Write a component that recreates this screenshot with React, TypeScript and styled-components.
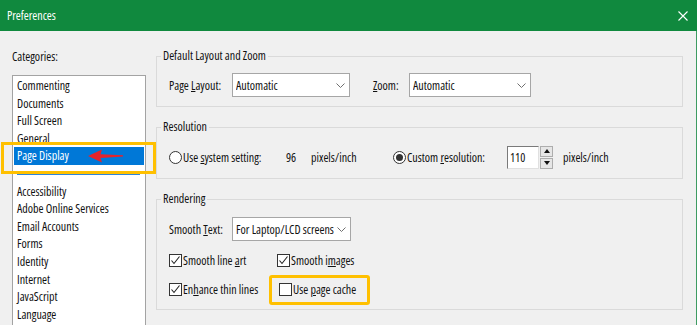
import styled, {createGlobalStyle} from 'styled-components';

const GlobalStyle = createGlobalStyle`
  html, body {
    margin: 0;
    padding: 0;
    background: #ffffff;
  }
  body {
    font-family: "Open Sans", "Liberation Sans", sans-serif;
    font-stretch: 75%;
    font-size: 12px;
    color: #111111;
  }
`;

const categoriesTop = ['Commenting', 'Documents', 'Full Screen', 'General'];
const categoriesBottom = [
  'Accessibility', 'Adobe Online Services', 'Email Accounts', 'Forms',
  'Identity', 'Internet', 'JavaScript', 'Language',
];

const Chevron = () => (
  <ChevronIcon width="9" height="5" viewBox="0 0 9 5">
    <polyline points="0.5,0.5 4.5,4.5 8.5,0.5" fill="none" stroke="#6f6f6f" strokeWidth="1" />
  </ChevronIcon>
);

const Dropdown = ({width, value}: {width: number; value: string}) => (
  <SelectBox $w={width}>
    <SelectValue>{value}</SelectValue>
    <Chevron />
  </SelectBox>
);

const Check = ({checked, children}: {checked?: boolean; children: React.ReactNode}) => (
  <CheckLabel>
    <CheckBox>
      {checked && (
        <svg width="11" height="11" viewBox="0 0 11 11">
          <polyline points="1.5,5.5 4,8.5 9.5,1.5" fill="none" stroke="#222" strokeWidth="1.1" />
        </svg>
      )}
    </CheckBox>
    <span>{children}</span>
  </CheckLabel>
);

export default function App() {
  return (
    <>
      <GlobalStyle />
      <Window>
        <TitleBar>
          <span>Preferences</span>
          <svg width="10" height="10" viewBox="0 0 10 10">
            <path d="M0.5 0.5 L9.5 9.5 M9.5 0.5 L0.5 9.5" stroke="#ffffff" strokeWidth="1.1" />
          </svg>
        </TitleBar>
        <Body>
          <Sidebar>
            <SidebarLabel>Categories:</SidebarLabel>
            <CategoryList>
              {categoriesTop.map(c => <CategoryItem key={c}>{c}</CategoryItem>)}
              <SelectedItem>
                Page Display
                <Arrow width="36" height="14" viewBox="0 0 36 14">
                  <polygon points="0,7 14,0.5 12.5,5.2 35,6.2 35,7.6 12.5,9 14,13.5" fill="#e5232b" />
                </Arrow>
              </SelectedItem>
              <SeparatorItem />
              {categoriesBottom.map(c => <CategoryItem key={c}>{c}</CategoryItem>)}
            </CategoryList>
          </Sidebar>

          <Main>
            <Group $top={9}>
              <Legend>Default Layout and Zoom</Legend>
              <GroupContent>
                <Row>
                  <FieldLabel $w={63}>Page <Key>L</Key>ayout:</FieldLabel>
                  <Dropdown width={118} value="Automatic" />
                  <FieldLabel $w={36} $ml={23}><Key>Z</Key>oom:</FieldLabel>
                  <Dropdown width={122} value="Automatic" />
                </Row>
              </GroupContent>
            </Group>

            <Group $top={10}>
              <Legend>Resolution</Legend>
              <GroupContent>
                <Row>
                  <RadioLabel $w={117}>
                    <Radio />
                    <span>Use <Key>s</Key>ystem setting:</span>
                  </RadioLabel>
                  <FieldLabel $w={25}>96</FieldLabel>
                  <FieldLabel $w={82}>pixels/inch</FieldLabel>
                  <RadioLabel $w={114}>
                    <Radio $checked />
                    <span>Custom <Key>r</Key>esolution:</span>
                  </RadioLabel>
                  <NumberInput>110</NumberInput>
                  <Spinner>
                    <SpinButton><Triangle $up /></SpinButton>
                    <SpinButton><Triangle /></SpinButton>
                  </Spinner>
                  <FieldLabel $w={60} $ml={10}>pixels/inch</FieldLabel>
                </Row>
              </GroupContent>
            </Group>

            <Group $top={10}>
              <Legend>Rendering</Legend>
              <GroupContent>
                <Row>
                  <FieldLabel $w={63}>Smooth <Key>T</Key>ext:</FieldLabel>
                  <Dropdown width={119} value="For Laptop/LCD screens" />
                </Row>
                <CheckGrid>
                  <Check checked>Smooth line <Key>a</Key>rt</Check>
                  <Check checked>Smooth i<Key>m</Key>ages</Check>
                  <Check checked>En<Key>h</Key>ance thin lines</Check>
                  <HighlightCell>
                    <Check>Use <Key>p</Key>age cache</Check>
                  </HighlightCell>
                </CheckGrid>
              </GroupContent>
            </Group>
          </Main>
        </Body>
      </Window>
    </>
  );
}

const Window = styled.div`
  width: 697px;
  height: 325px;
  display: flex;
  flex-direction: column;
  overflow: hidden;
`;

const TitleBar = styled.div`
  flex: none;
  height: 31px;
  display: flex;
  align-items: center;
  justify-content: space-between;
  padding: 0 9px 0 7px;
  background: #10893e;
  color: #ffffff;
  font-size: 12px;
`;

const Body = styled.div`
  flex: 1;
  display: flex;
  min-height: 0;
  overflow: hidden;
  background: #f0f0f0;
  border-right: 1px solid #3d9c62;
`;

const Sidebar = styled.div`
  flex: none;
  width: 156px;
  box-sizing: border-box;
  padding: 17px 0 0 12px;
  display: flex;
  flex-direction: column;
`;

const SidebarLabel = styled.div`
  line-height: 18px;
  margin-bottom: 9px;
`;

const CategoryList = styled.ul`
  flex: none;
  width: 134px;
  height: 300px;
  box-sizing: border-box;
  margin: 0;
  padding: 1px;
  list-style: none;
  background: #ffffff;
  border: 1px solid #a3a3a3;
`;

const CategoryItem = styled.li`
  height: 17.6px;
  line-height: 17.6px;
  padding-left: 3px;
  white-space: nowrap;
`;

const SelectedItem = styled(CategoryItem)`
  position: relative;
  background: #0078d7;
  color: #ffffff;

  &::after {
    content: '';
    position: absolute;
    left: -13px;
    top: -5px;
    width: 155px;
    height: 32px;
    box-sizing: border-box;
    border: 3px solid #ffc000;
    pointer-events: none;
  }
`;

const Arrow = styled.svg`
  position: absolute;
  left: 74px;
  top: 2px;
`;

const SeparatorItem = styled.li`
  height: 17.6px;
  display: flex;
  align-items: center;
  padding: 0 4px 0 3px;

  &::before {
    content: '';
    flex: 1;
    height: 2px;
    background: #2f86d9;
  }
`;

const Main = styled.div`
  flex: 1;
  min-width: 0;
  padding: 17px 13px 0 0;
  display: flex;
  flex-direction: column;
  gap: 12px;
`;

const Group = styled.fieldset<{$top: number}>`
  margin: 0;
  min-width: 0;
  padding: ${p => p.$top}px 12px 9px 12px;
  border: 1px solid #dadada;
`;

const Legend = styled.legend`
  margin-left: -8px;
  padding: 0 2px;
  line-height: 16px;
`;

const GroupContent = styled.div`
  display: flex;
  flex-direction: column;
  gap: 9px;
`;

const Row = styled.div`
  display: flex;
  align-items: center;
  height: 24px;
`;

const FieldLabel = styled.span<{$w: number; $ml?: number}>`
  flex: none;
  width: ${p => p.$w}px;
  margin-left: ${p => p.$ml ?? 0}px;
  white-space: nowrap;
`;

const Key = styled.u`
  text-underline-offset: 1px;
`;

const SelectBox = styled.div<{$w: number}>`
  flex: none;
  width: ${p => p.$w}px;
  height: 24px;
  box-sizing: border-box;
  display: flex;
  align-items: center;
  padding-left: 3px;
  background: #ffffff;
  border: 1px solid #a6a6a6;
`;

const SelectValue = styled.span`
  flex: 1;
  min-width: 0;
  overflow: hidden;
  white-space: nowrap;
`;

const ChevronIcon = styled.svg`
  flex: none;
  margin: 0 4px 0 3px;
`;

const RadioLabel = styled.label<{$w: number}>`
  flex: none;
  width: ${p => p.$w}px;
  display: flex;
  align-items: center;
  gap: 1px;
  white-space: nowrap;
`;

const Radio = styled.span<{$checked?: boolean}>`
  flex: none;
  width: 13px;
  height: 13px;
  box-sizing: border-box;
  border-radius: 50%;
  border: 1px solid #333333;
  background: #ffffff;
  display: grid;
  place-items: center;

  &::after {
    content: '';
    width: 7px;
    height: 7px;
    border-radius: 50%;
    background: ${p => (p.$checked ? '#333333' : 'transparent')};
  }
`;

const NumberInput = styled.div`
  flex: none;
  width: 32px;
  height: 23px;
  box-sizing: border-box;
  padding-left: 2px;
  line-height: 21px;
  background: #ffffff;
  border: 1px solid;
  border-color: #7a7a7a #e0e0e0 #e0e0e0 #7a7a7a;
`;

const Spinner = styled.div`
  flex: none;
  margin-left: 1px;
  display: flex;
  flex-direction: column;
  gap: 1px;
`;

const SpinButton = styled.div`
  width: 13px;
  height: 11px;
  box-sizing: border-box;
  border: 1px solid #adadad;
  background: #e6e6e6;
  display: grid;
  place-items: center;
`;

const Triangle = styled.span<{$up?: boolean}>`
  width: 0;
  height: 0;
  border-left: 3px solid transparent;
  border-right: 3px solid transparent;
  ${p => (p.$up ? 'border-bottom: 4px solid #111;' : 'border-top: 4px solid #111;')}
`;

const CheckGrid = styled.div`
  display: grid;
  grid-template-columns: 108px auto;
  grid-auto-rows: 21px;
  row-gap: 8px;
`;

const CheckLabel = styled.label`
  display: flex;
  align-items: center;
  gap: 1px;
  white-space: nowrap;
`;

const CheckBox = styled.span`
  flex: none;
  width: 13px;
  height: 13px;
  box-sizing: border-box;
  border: 1px solid #333333;
  background: #ffffff;
  display: grid;
  place-items: center;
`;

const HighlightCell = styled.div`
  position: relative;
  display: flex;
  padding-left: 2px;

  &::after {
    content: '';
    position: absolute;
    left: -8px;
    top: -4px;
    width: 101px;
    height: 30px;
    box-sizing: border-box;
    border: 3px solid #ffc000;
    border-radius: 3px;
    pointer-events: none;
  }
`;
